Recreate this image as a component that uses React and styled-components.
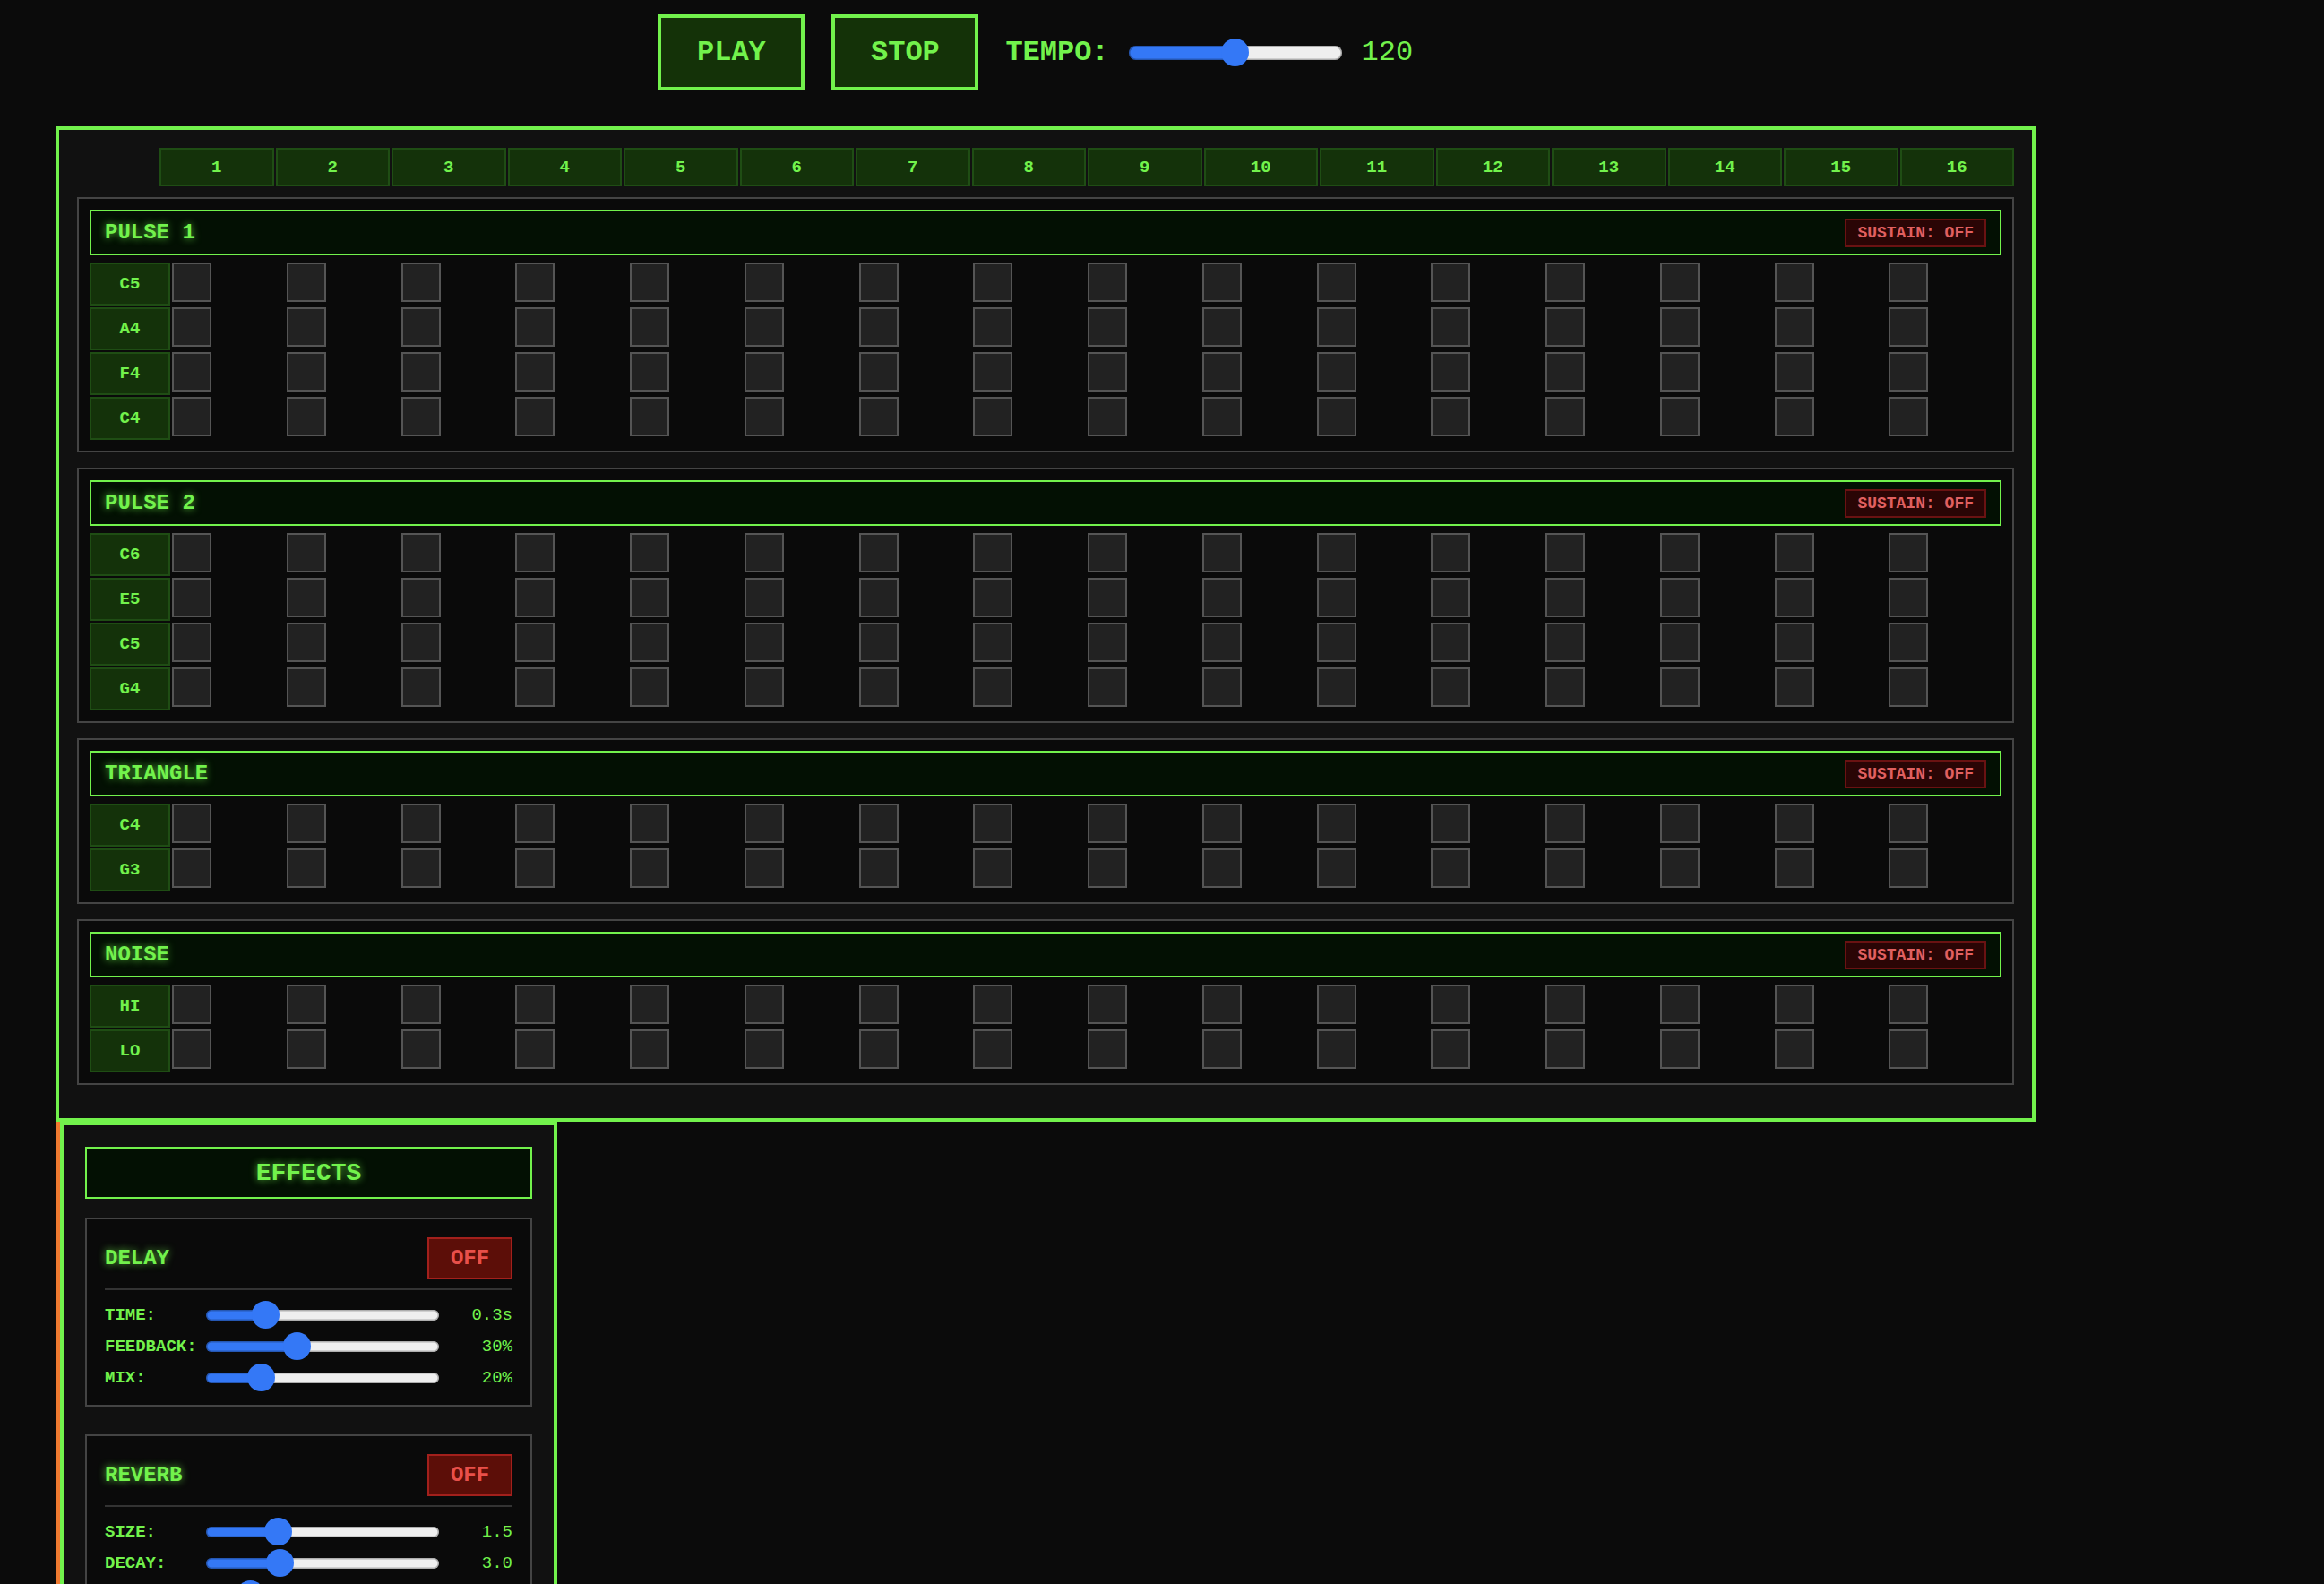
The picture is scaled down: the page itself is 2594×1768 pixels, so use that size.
import React from 'react';
import styled, { createGlobalStyle } from 'styled-components';

const GREEN = '#72f24c';
const FONT = `"Courier New", "Liberation Mono", monospace`;

const GlobalStyle = createGlobalStyle`
  html, body { margin: 0; padding: 0; background: #0b0b0b; }
  body { font-family: ${FONT}; color: ${GREEN}; }
  *, *::before, *::after { box-sizing: border-box; }
  button { font-family: ${FONT}; }
`;

const Page = styled.div`
  width: 2594px;
  min-height: 1768px;
  padding: 16px 0 0 62px;
  background: #0b0b0b;
`;

const Column = styled.div`
  width: 2210px;
  display: flex;
  flex-direction: column;
  align-items: flex-start;
`;

const Controls = styled.div`
  width: 100%;
  height: 85px;
  display: flex;
  justify-content: center;
  align-items: center;
  gap: 30px;
  margin-bottom: 40px;
`;

const TransportButton = styled.button`
  width: 164px;
  height: 85px;
  border: 4px solid ${GREEN};
  background: #143208;
  color: ${GREEN};
  font-size: 32px;
  font-weight: bold;
  padding: 0;
  cursor: pointer;
`;

const TempoGroup = styled.div`
  display: flex;
  align-items: center;
  gap: 22px;
`;

const TempoLabel = styled.span`
  font-size: 32px;
  font-weight: bold;
`;

const TempoValue = styled.span`
  font-size: 32px;
  min-width: 80px;
`;

const Range = styled.input.attrs({ type: 'range' })`
  -webkit-appearance: none;
  appearance: none;
  display: block;
  width: ${(p) => p.$width}px;
  height: 31px;
  margin: 0;
  padding: 0;
  background: transparent;
  --fill: calc(15.5px + ${(p) => p.$frac} * (100% - 31px));
  &::-webkit-slider-runnable-track {
    height: ${(p) => p.$track}px;
    border-radius: ${(p) => p.$track / 2}px;
    background: linear-gradient(
      to right,
      #3478f6 0,
      #3478f6 var(--fill),
      #efefef var(--fill),
      #efefef 100%
    );
    box-shadow: inset 0 0 0 1.5px rgba(0, 0, 0, 0.27);
  }
  &::-webkit-slider-thumb {
    -webkit-appearance: none;
    appearance: none;
    width: 31px;
    height: 31px;
    border-radius: 50%;
    border: none;
    background: #3478f6;
    margin-top: ${(p) => (p.$track - 31) / 2}px;
  }
`;

const Sequencer = styled.section`
  width: 2210px;
  border: 4px solid ${GREEN};
  background: #111111;
  padding: 20px;
`;

const StepHeader = styled.div`
  display: grid;
  grid-template-columns: 90px repeat(16, 1fr);
  gap: 2px;
  margin-bottom: 12px;
`;

const HeaderCell = styled.div`
  height: 43px;
  background: #14320a;
  border: 2px solid #1f4d14;
  display: flex;
  align-items: center;
  justify-content: center;
  font-size: 19px;
  font-weight: bold;
`;

const TrackBox = styled.div`
  border: 2px solid #444444;
  background: #0a0a0a;
  padding: 12px;
  margin-bottom: 17px;
`;

const TrackHeader = styled.div`
  height: 51px;
  border: 2px solid ${GREEN};
  background: #031003;
  display: flex;
  align-items: center;
  justify-content: space-between;
  padding: 0 15px;
  margin-bottom: 8px;
`;

const TrackName = styled.span`
  font-size: 24px;
  font-weight: bold;
  text-shadow: 0 0 8px rgba(114, 242, 76, 0.75);
`;

const SustainButton = styled.button`
  height: 32px;
  padding: 0 12px;
  border: 2px solid #6a1212;
  background: #2a0505;
  color: #e06060;
  font-size: 18px;
  font-weight: bold;
  line-height: 28px;
`;

const StepGrid = styled.div`
  display: grid;
  grid-template-columns: 90px repeat(16, 1fr);
  gap: 2px;
`;

const NoteLabel = styled.div`
  height: 48px;
  background: #14320a;
  border: 2px solid #1f4d14;
  display: flex;
  align-items: center;
  justify-content: center;
  font-size: 19px;
  font-weight: bold;
`;

const StepCell = styled.div`
  width: 44px;
  height: 44px;
  border: 2px solid #555555;
  background: ${(p) => (p.$on ? GREEN : '#222222')};
`;

const EffectsWrap = styled.div`
  border-left: 5px solid #f07a30;
`;

const EffectsPanel = styled.aside`
  width: 555px;
  border: 4px solid ${GREEN};
  background: #111111;
  padding: 24px;
`;

const EffectsTitle = styled.div`
  height: 58px;
  border: 2px solid ${GREEN};
  background: #031003;
  display: flex;
  align-items: center;
  justify-content: center;
  font-size: 28px;
  font-weight: bold;
  text-shadow: 0 0 8px rgba(114, 242, 76, 0.75);
  margin-bottom: 21px;
`;

const EffectBox = styled.div`
  border: 2px solid #444444;
  background: #0a0a0a;
  padding: 20px 20px 13px;
  margin-bottom: 31px;
`;

const EffectHead = styled.div`
  display: flex;
  align-items: center;
  justify-content: space-between;
  padding-bottom: 10px;
  border-bottom: 2px solid #333333;
  margin-bottom: 10px;
`;

const EffectName = styled.span`
  font-size: 24px;
  font-weight: bold;
  text-shadow: 0 0 8px rgba(114, 242, 76, 0.75);
`;

const ToggleButton = styled.button`
  width: 95px;
  height: 47px;
  border: 2px solid #a3201c;
  background: #5c0e08;
  color: #e8504a;
  font-size: 24px;
  font-weight: bold;
  padding: 0;
`;

const ParamRow = styled.div`
  display: grid;
  grid-template-columns: 113px 260px 1fr;
  align-items: center;
  height: 35px;
`;

const ParamLabel = styled.span`
  font-size: 19px;
  font-weight: bold;
`;

const ParamValue = styled.span`
  font-size: 19px;
  text-align: right;
`;

const tracks = [
  { name: 'PULSE 1', notes: ['C5', 'A4', 'F4', 'C4'] },
  { name: 'PULSE 2', notes: ['C6', 'E5', 'C5', 'G4'] },
  { name: 'TRIANGLE', notes: ['C4', 'G3'] },
  { name: 'NOISE', notes: ['HI', 'LO'] },
];

const effects = [
  {
    name: 'DELAY',
    params: [
      { label: 'TIME:', value: 0.3, min: 0.1, max: 1, text: '0.3s' },
      { label: 'FEEDBACK:', value: 0.3, min: 0, max: 0.8, text: '30%' },
      { label: 'MIX:', value: 0.2, min: 0, max: 1, text: '20%' },
    ],
  },
  {
    name: 'REVERB',
    params: [
      { label: 'SIZE:', value: 1.5, min: 0.1, max: 5, text: '1.5' },
      { label: 'DECAY:', value: 3.0, min: 0.1, max: 10, text: '3.0' },
      { label: 'MIX:', value: 0.15, min: 0, max: 1, text: '15%' },
    ],
  },
];

const steps = Array.from({ length: 16 }, (_, i) => i + 1);

function Slider({ min, max, value, width, track }) {
  const frac = (value - min) / (max - min);
  return (
    <Range
      min={min}
      max={max}
      step="any"
      defaultValue={value}
      $frac={frac}
      $width={width}
      $track={track}
    />
  );
}

function Track({ track }) {
  return (
    <TrackBox>
      <TrackHeader>
        <TrackName>{track.name}</TrackName>
        <SustainButton>SUSTAIN: OFF</SustainButton>
      </TrackHeader>
      <StepGrid>
        {track.notes.map((note) => (
          <React.Fragment key={note}>
            <NoteLabel>{note}</NoteLabel>
            {steps.map((s) => (
              <StepCell key={s} />
            ))}
          </React.Fragment>
        ))}
      </StepGrid>
    </TrackBox>
  );
}

function Effect({ effect }) {
  return (
    <EffectBox>
      <EffectHead>
        <EffectName>{effect.name}</EffectName>
        <ToggleButton>OFF</ToggleButton>
      </EffectHead>
      {effect.params.map((p) => (
        <ParamRow key={p.label}>
          <ParamLabel>{p.label}</ParamLabel>
          <Slider min={p.min} max={p.max} value={p.value} width={260} track={12} />
          <ParamValue>{p.text}</ParamValue>
        </ParamRow>
      ))}
    </EffectBox>
  );
}

export default function App() {
  return (
    <>
      <GlobalStyle />
      <Page>
        <Column>
          <Controls>
            <TransportButton>PLAY</TransportButton>
            <TransportButton>STOP</TransportButton>
            <TempoGroup>
              <TempoLabel>TEMPO:</TempoLabel>
              <Slider min={60} max={180} value={120} width={238} track={16} />
              <TempoValue>120</TempoValue>
            </TempoGroup>
          </Controls>
          <Sequencer>
            <StepHeader>
              <span />
              {steps.map((s) => (
                <HeaderCell key={s}>{s}</HeaderCell>
              ))}
            </StepHeader>
            {tracks.map((t) => (
              <Track key={t.name} track={t} />
            ))}
          </Sequencer>
          <EffectsWrap>
            <EffectsPanel>
              <EffectsTitle>EFFECTS</EffectsTitle>
              {effects.map((e) => (
                <Effect key={e.name} effect={e} />
              ))}
            </EffectsPanel>
          </EffectsWrap>
        </Column>
      </Page>
    </>
  );
}
